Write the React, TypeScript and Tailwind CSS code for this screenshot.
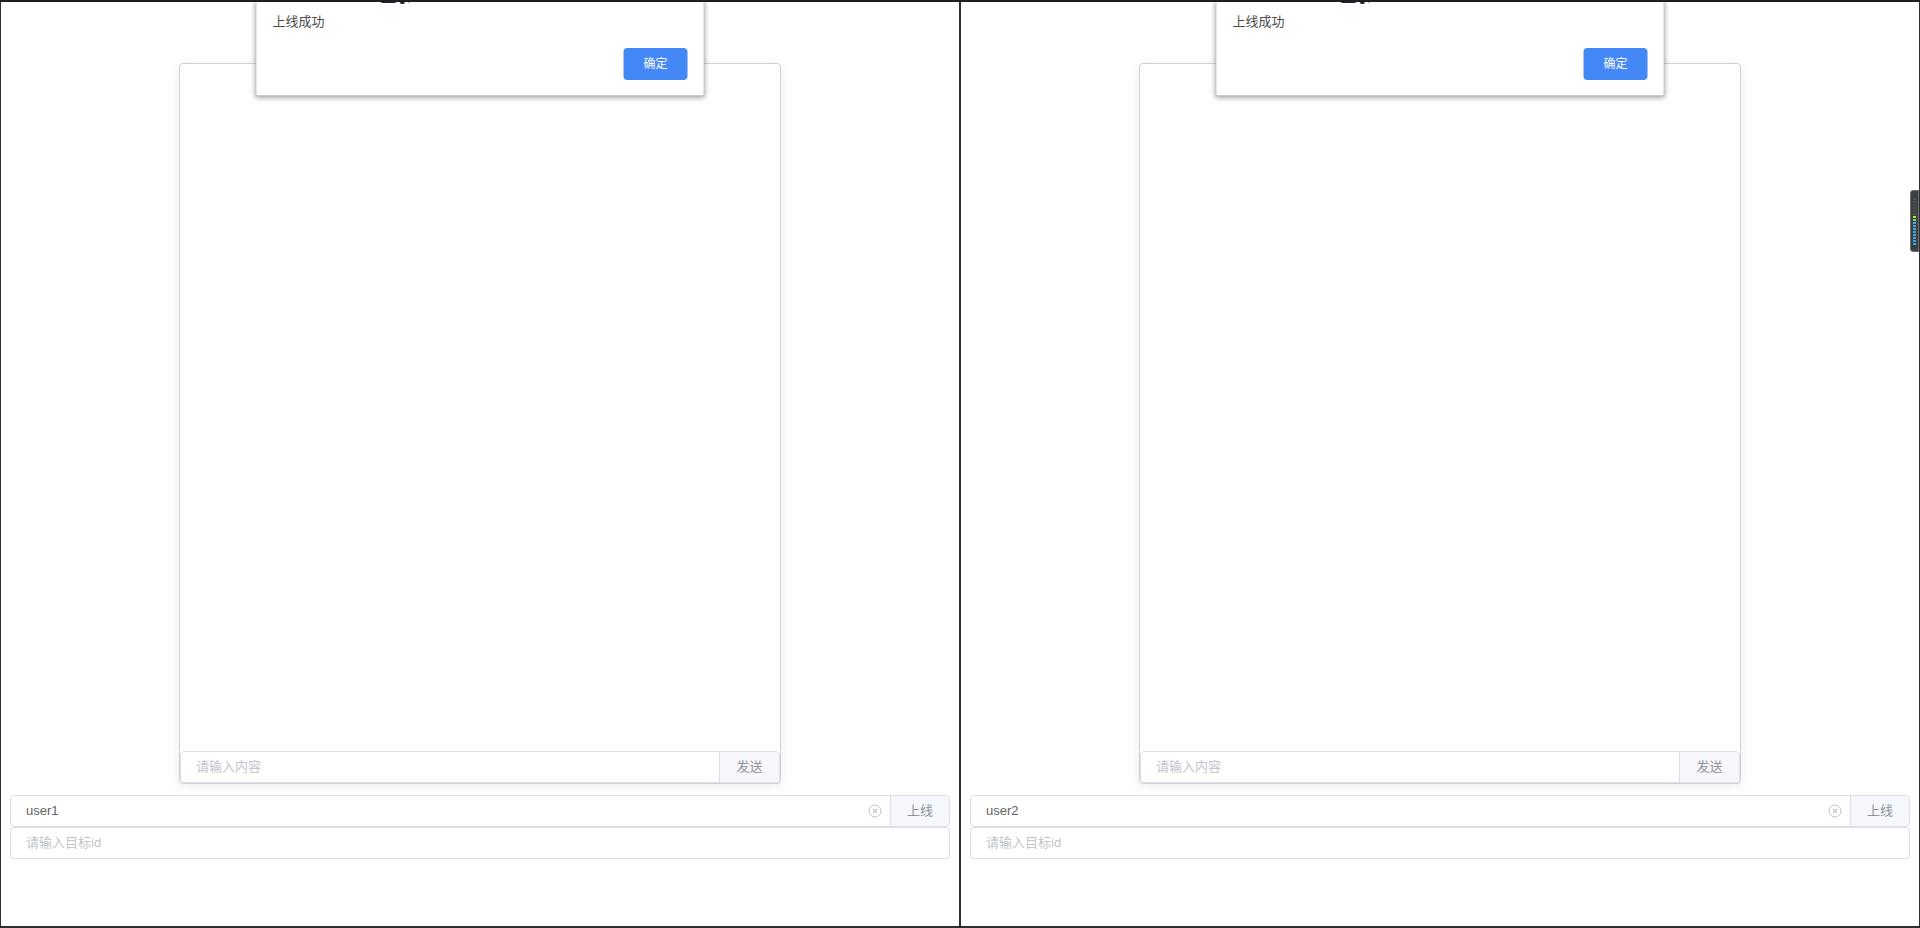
import React from "react"

const font = { fontFamily: '"Liberation Sans", "Noto Sans CJK SC", sans-serif' }

function ClearIcon() {
	return (
		<svg width="14" height="14" viewBox="0 0 14 14" fill="none">
			<circle cx="7" cy="7" r="6" stroke="#c0c4cc" strokeWidth="1" />
			<path d="M5 5 L9 9 M9 5 L5 9" stroke="#c0c4cc" strokeWidth="1.1" />
		</svg>
	)
}

function AlertDialog() {
	return (
		<div className="absolute top-[-2px] left-1/2 -translate-x-1/2 w-[449px] h-[96px] bg-white rounded-b-[2px] shadow-[0_2px_5px_rgba(0,0,0,0.35)] border-x border-b border-[#c9c9c9] z-10 overflow-hidden">
			<div className="absolute left-[16px] top-[-12px] text-[15px] leading-[18px] font-bold text-[#202124] whitespace-nowrap">
				localhost:8080 显示
			</div>
			<div className="absolute left-[16px] top-[13px] text-[13px] leading-[18px] text-[#4a4a4a]">
				上线成功
			</div>
			<button className="absolute right-[16px] top-[48px] w-[64px] h-[32px] rounded-[4px] bg-[#4487f7] text-white text-[12px]">
				确定
			</button>
		</div>
	)
}

function Meter() {
	const segs = [
		"#4a4d52", "#4a4d52", "#4a4d52", "#4a4d52", "#4a4d52", "#4a4d52",
		"#c6d93a", "#8fd14f", "#42b4e6", "#3aa6e8", "#3aa6e8", "#3aa6e8",
		"#3aa6e8", "#3aa6e8", "#3aa6e8", "#3aa6e8",
	]
	return (
		<div className="absolute right-0 top-[188px] w-[9px] h-[62px] bg-[#3c4043] border border-[#6b6f75] rounded-l-[3px] flex flex-col items-center pt-[7px] gap-[1px] z-20">
			{segs.map((c, i) => (
				<div key={i} className="w-[3px] h-[2px]" style={{ backgroundColor: c }} />
			))}
		</div>
	)
}

function Pane({ user, meter }: { user: string; meter?: boolean }) {
	return (
		<div className="relative flex-1 bg-white px-[9px]" style={font}>
			<AlertDialog />
			{meter && <Meter />}
			<div className="mx-auto mt-[61px] w-[602px] h-[721px] border border-[#cfd1d6] rounded-[4px] shadow-[0_2px_12px_rgba(0,0,0,0.08)] flex flex-col">
				<div className="flex-1" />
				<div className="flex h-[32px] border border-[#dcdfe6] rounded-[4px] text-[13px]">
					<div className="flex-1 flex items-center px-[15px] text-[#c0c4cc]">请输入内容</div>
					<div className="w-[60px] flex items-center justify-center bg-[#f5f7fa] border-l border-[#dcdfe6] text-[#909399] rounded-r-[4px]">
						发送
					</div>
				</div>
			</div>
			<div className="mt-[11px] flex flex-col">
				<div className="flex h-[32px] border border-[#dcdfe6] rounded-[4px] text-[13px]">
					<div className="flex-1 flex items-center pl-[15px] pr-[8px] text-[#606266]">
						<span className="flex-1">{user}</span>
						<ClearIcon />
					</div>
					<div className="w-[59px] flex items-center justify-center bg-[#f5f7fa] border-l border-[#dcdfe6] text-[#909399] rounded-r-[4px]">
						上线
					</div>
				</div>
				<div className="flex items-center h-[32px] border border-[#dcdfe6] rounded-[4px] px-[15px] text-[13px] text-[#c0c4cc]">
					请输入目标id
				</div>
			</div>
		</div>
	)
}

export default function App() {
	return (
		<div className="w-full h-[928px] flex gap-[2px] bg-[#2e2f31] border-t-[2px] border-t-[#1c1f23] pb-[2px] px-[1px] overflow-hidden">
			<Pane user="user1" />
			<Pane user="user2" meter />
		</div>
	)
}
